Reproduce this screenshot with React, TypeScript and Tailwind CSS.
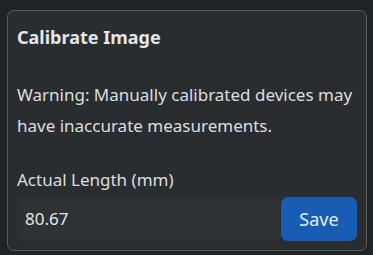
import React from "react";

export default function App() {
  return (
    <div
      className="w-[373px] h-[255px] bg-[#1f2227] pt-[10px] pl-[7px]"
      style={{ fontFamily: '"Noto Sans", "Open Sans", sans-serif' }}
    >
      <div className="w-[360px] h-[241px] rounded-[7px] border border-[#5e5b55] bg-[#2a2d2f] px-[9px] pt-[14px]">
        <div className="text-[18px] font-bold leading-[24px] text-[#e4e6e8]">Calibrate Image</div>
        <div className="mt-[30px] text-[17px] leading-[31px] text-[#dcdee0]">
          Warning: Manually calibrated devices may have inaccurate measurements.
        </div>
        <div className="mt-[27px] text-[17px] leading-[24px] text-[#dcdee0]">Actual Length (mm)</div>
        <div className="mt-[5px] flex gap-[1px]">
          <div className="flex h-[44px] flex-1 items-center rounded-[6px] bg-[#2f3234] pl-[8px] text-[17px] text-[#e4e6e8]">
            80.67
          </div>
          <div className="flex h-[44px] w-[76px] items-center justify-center rounded-[7px] bg-[#185db3] text-[18px] text-[#e6eaf0]">
            Save
          </div>
        </div>
      </div>
    </div>
  );
}
